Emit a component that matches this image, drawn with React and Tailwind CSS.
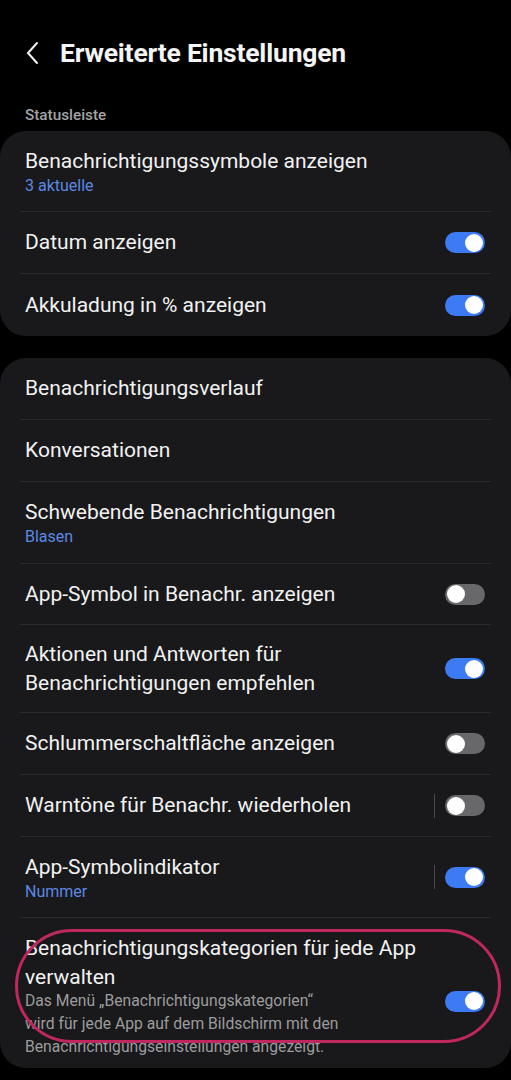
const Toggle = ({ on, sep }) => (
  <div className="flex items-center shrink-0 self-center">
    {sep && <div className="w-px h-6 bg-[#4a4a4c] mr-[10px]" />}
    <div
      className={`w-[40px] h-[21px] rounded-full flex items-center px-[2px] ${
        on ? "bg-[#3d7bf4] justify-end" : "bg-[#68686a] justify-start"
      }`}
    >
      <div className="w-[18px] h-[18px] rounded-full bg-white" />
    </div>
  </div>
);

const Row = ({ title, sub, desc, toggle, sep, h, top, last, children }) => (
  <div className={`relative flex flex-col ${h}`}>
    <div className={`flex-1 flex pl-[25px] pr-[26px] gap-3 ${top ? "items-start pt-[16px]" : "items-center"}`}>
      <div className="flex-1 min-w-0">
        <div className="text-[21px] leading-[29px] text-[#f2f2f2]">{title}</div>
        {sub && <div className="text-[16px] leading-[20px] text-[#5d88e3]">{sub}</div>}
        {desc && <div className="text-[15.7px] leading-[23px] text-[#9c9c9e] -mt-[3px]">{desc}</div>}
      </div>
      {toggle !== undefined && <Toggle on={toggle} sep={sep} />}
    </div>
    {!last && <div className="mx-[20px] h-px bg-[#2b2b2d]" />}
    {children}
  </div>
);

export default function App() {
  return (
    <div className="w-[511px] h-[1080px] bg-black overflow-hidden font-['Roboto',sans-serif]">
      {/* Header */}
      <div className="h-[106px] flex items-start pt-[35px]">
        <svg width="60" height="38" viewBox="0 0 60 38" className="shrink-0">
          <path d="M37 8 L28 18 L37 28" fill="none" stroke="#f2f2f2" strokeWidth="2" strokeLinecap="round" strokeLinejoin="round" />
        </svg>
        <h1 className="text-[26.5px] leading-[36px] font-bold text-[#f5f5f5] tracking-[-0.2px]">Erweiterte Einstellungen</h1>
      </div>

      <div className="pl-[25px] text-[15.3px] leading-[18px] font-medium text-[#a3a3a5] h-[25px]">Statusleiste</div>

      {/* Card 1 */}
      <div className="bg-[#19191b] rounded-[26px]">
        <Row title="Benachrichtigungssymbole anzeigen" sub="3 aktuelle" h="h-[81px]" />
        <Row title="Datum anzeigen" toggle={true} h="h-[62px]" />
        <Row title="Akkuladung in % anzeigen" toggle={true} h="h-[62px]" last />
      </div>

      {/* Card 2 */}
      <div className="bg-[#19191b] rounded-[26px] mt-[22px]">
        <Row title="Benachrichtigungsverlauf" h="h-[62px]" />
        <Row title="Konversationen" h="h-[62px]" />
        <Row title="Schwebende Benachrichtigungen" sub="Blasen" h="h-[82px]" />
        <Row title="App-Symbol in Benachr. anzeigen" toggle={false} h="h-[61px]" />
        <Row
          title={<>Aktionen und Antworten für<br />Benachrichtigungen empfehlen</>}
          toggle={true}
          h="h-[88px]"
        />
        <Row title="Schlummerschaltfläche anzeigen" toggle={false} h="h-[62px]" />
        <Row title="Warntöne für Benachr. wiederholen" toggle={false} sep h="h-[62px]" />
        <Row title="App-Symbolindikator" sub="Nummer" toggle={true} sep h="h-[81px]" />
        <Row
          title={<>Benachrichtigungskategorien für jede App<br />verwalten</>}
          desc={<>Das Menü „Benachrichtigungskategorien“<br />wird für jede App auf dem Bildschirm mit den<br />Benachrichtigungseinstellungen angezeigt.</>}
          toggle={true}
          h="h-[150px]"
          top
          last
        >
          <div className="absolute left-[15px] top-[11px] w-[486px] h-[114px] rounded-[57px] border-[3px] border-[#c0275f] pointer-events-none" />
        </Row>
      </div>
    </div>
  );
}
